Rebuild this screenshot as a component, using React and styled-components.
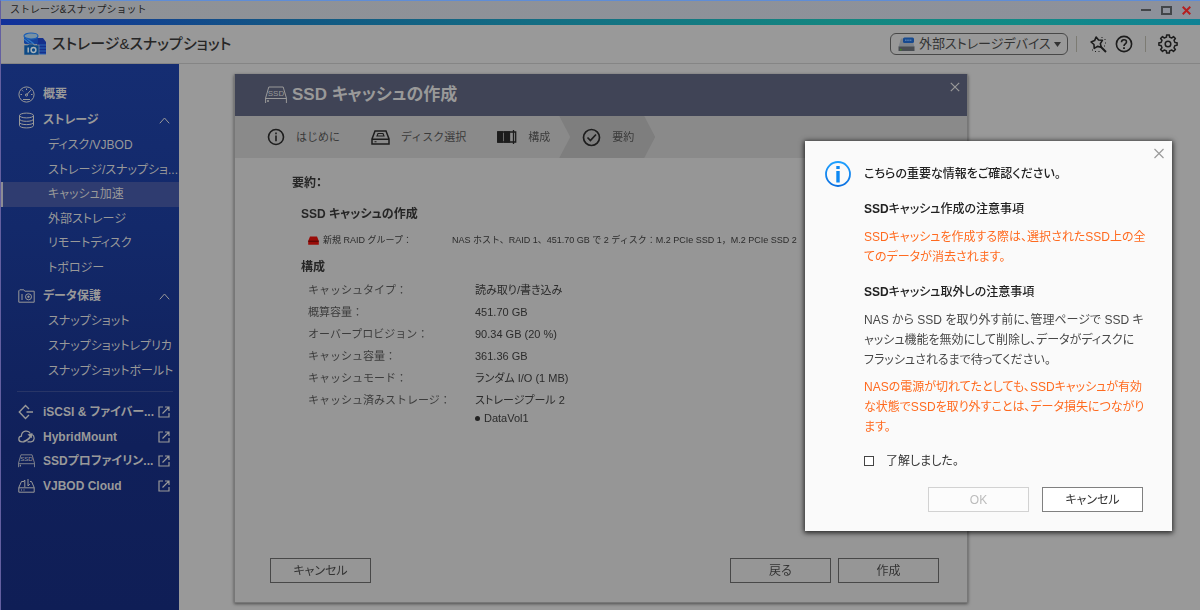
import React, { useState } from "react";
import styled, { createGlobalStyle, css } from "styled-components";

const GlobalStyle = createGlobalStyle`
  *, *::before, *::after { box-sizing: border-box; }
  body {
    margin: 0;
    background: #999;
    color: #2b2b2b;
    font-family: "Liberation Sans", "Noto Sans CJK JP", sans-serif;
    font-size: 12px;
    font-feature-settings: "palt";
    line-height: 20px;
  }
  h1, h2, h3, p, ul, dl, dd { margin: 0; padding: 0; font-size: inherit; font-weight: inherit; }
  ul { list-style: none; }
  a { color: inherit; text-decoration: none; }
  button, select { font: inherit; font-feature-settings: inherit; color: inherit; }
  svg { display: block; flex: none; }
`;

/* ---------- window frame ---------- */

const Window = styled.div`
  display: flex;
  flex-direction: column;
  min-height: 100vh;
  border-top: 1px solid #5f8dd6;
  border-left: 1px solid #635fa0;
`;

const TitleBar = styled.header`
  display: flex;
  align-items: center;
  justify-content: space-between;
  height: 18px;
  padding: 0 9px;
  background: linear-gradient(90deg, #8f9296, #8d919b);
  font-size: 10px;
  font-feature-settings: normal;
  color: #1f1f1f;
`;

const WindowButtons = styled.div`
  display: flex;
  gap: 10px;
`;

const IconButton = styled.button`
  display: flex;
  align-items: center;
  justify-content: center;
  padding: 0;
  border: 0;
  background: none;
  color: ${(p) => p.$color || "#1c1c1c"};
`;

const Stripe = styled.div`
  height: 6px;
  background: linear-gradient(90deg, #11309a 0%, #125783 24%, #136d83 45%, #138680 70%, #128a86 85%, #108295 100%);
`;

const AppHeader = styled.header`
  display: flex;
  align-items: center;
  height: 39px;
  padding: 0 22px 0 22px;
  border-bottom: 1px solid #858585;
`;

const AppTitle = styled.h1`
  flex: 1;
  margin-left: 5px;
  font-size: 15px;
  font-weight: 500;
  color: #262626;
`;

const DevicePicker = styled.label`
  display: flex;
  align-items: center;
  gap: 4px;
  width: 178px;
  height: 22px;
  padding: 0 6px 0 7px;
  border: 1px solid #484848;
  border-radius: 6px;
`;

const DeviceSelect = styled.select`
  flex: 1;
  min-width: 0;
  height: 20px;
  padding: 0;
  border: 0;
  appearance: none;
  background: none;
  font-size: 13px;
  line-height: 20px;
  color: #333;
`;

const Separator = styled.span`
  width: 1px;
  height: 16px;
  margin: 0 ${(p) => p.$right}px 0 ${(p) => p.$left}px;
  background: #7c7b73;
`;

const HeaderTools = styled.div`
  display: flex;
  gap: 8px;
`;

/* ---------- sidebar ---------- */

const Columns = styled.div`
  display: flex;
  flex: 1;
`;

const Sidebar = styled.nav`
  width: 178px;
  padding-top: 17px;
  background: linear-gradient(#152d72, #13296a 30%, #10205a 70%, #0f1e56);
  color: #999;
`;

const GroupLink = styled.a`
  display: flex;
  align-items: center;
  gap: 8px;
  height: ${(p) => (p.$small ? 24 : 26)}px;
  padding: 0 9px 0 17px;
  font-weight: 700;
  white-space: nowrap;
`;

const GroupLabel = styled.span`
  flex: 1;
  min-width: 0;
`;

const SubList = styled.ul`
  display: grid;
  grid-template-columns: 100%;
  grid-auto-rows: 1fr;
  height: ${(p) => p.$height}px;
  margin-bottom: 3px;
`;

const SubLink = styled.a`
  display: flex;
  align-items: center;
  height: 100%;
  padding-left: 47px;
  white-space: nowrap;
  ${(p) =>
    p.$active &&
    css`
      padding-left: 45px;
      border-left: 2px solid #8c8c94;
      background: #2f3c70;
    `}
`;

const Rule = styled.hr`
  margin: 8px 6px 8px 16px;
  border: 0;
  border-top: 1px solid #283567;
`;

/* ---------- wizard ---------- */

const Layer = styled.div`
  position: fixed;
  inset: 0;
  display: flex;
  justify-content: ${(p) => p.$justify};
  align-items: ${(p) => p.$align};
  padding: ${(p) => p.$padding};
`;

const Wizard = styled.section`
  display: flex;
  flex-direction: column;
  width: 100%;
  max-width: 734px;
  border: 1px solid #777;
  border-top: 0;
  background: #969696;
  box-shadow: 0 1px 3px rgba(0, 0, 0, 0.5);
`;

const WizardHeader = styled.header`
  display: flex;
  align-items: center;
  gap: 5px;
  height: 42px;
  padding: 0 7px 0 30px;
  background: #404456;
  color: #999;
`;

const WizardTitle = styled.h2`
  flex: 1;
  font-size: 17px;
  font-weight: 700;
`;

const CloseSlot = styled.div`
  align-self: flex-start;
  margin-top: 8px;
`;

const Steps = styled.ol`
  display: flex;
  height: 42px;
  margin: 0;
  padding: 0 0 0 32px;
  list-style: none;
  background: #8a8a8a;
  font-size: 11px;
  font-feature-settings: normal;
  color: #3a3a3a;
  svg { color: #1d1d1d; }
`;

const Step = styled.li`
  display: flex;
  align-items: center;
  gap: 11px;
  padding-right: 31px;
  ${(p) =>
    p.$current &&
    css`
      margin-left: -22px;
      padding: 0 21px 0 23px;
      background: #7e7e7e;
      clip-path: polygon(0 0, calc(100% - 11px) 0, 100% 50%, calc(100% - 11px) 100%, 0 100%, 11px 50%);
    `}
`;

const WizardBody = styled.div`
  flex: 1;
  padding: 15px 29px 0 57px;
`;

const BodyHeading = styled.h3`
  margin-left: ${(p) => p.$indent || 0}px;
  margin-bottom: ${(p) => p.$below || 0}px;
  font-weight: 700;
  color: #262626;
`;

const RaidRow = styled.dl`
  display: flex;
  align-items: center;
  margin: 6px 0 7px 16px;
  font-size: 9px;
  font-feature-settings: normal;
  white-space: nowrap;
`;

const RaidTerm = styled.dt`
  display: flex;
  align-items: center;
  gap: 4px;
  width: 144px;
`;

const Facts = styled.table`
  margin: 2px 0 0 16px;
  border-collapse: collapse;
  font-size: 11px;
  th, td { height: 22px; padding: 0; vertical-align: top; text-align: left; font-weight: 400; line-height: 22px; }
  th { width: 167px; font-feature-settings: normal; color: #3c3c3c; }
`;

const Volume = styled.div`
  display: flex;
  align-items: center;
  gap: 4px;
  line-height: 14px;
  &::before { content: ""; width: 5px; height: 5px; border-radius: 50%; background: #222; }
`;

const WizardFooter = styled.footer`
  display: flex;
  gap: 7px;
  padding: 0 28px 19px 35px;
`;

const Button = styled.button`
  width: 101px;
  height: 25px;
  padding: 0;
  border: 1px solid ${(p) => (p.$light ? "#808080" : "#484848")};
  background: ${(p) => (p.$light ? "#fff" : "transparent")};
  color: #333;
  ${(p) => p.$push && "margin-right: auto;"}
  &:disabled { border-color: #d2d2d2; background: #fcfcfc; color: #bcbcbc; }
`;

/* ---------- notice ---------- */

const Notice = styled.section`
  display: flex;
  flex-direction: column;
  width: 367px;
  max-width: 100%;
  padding: 4px 6px 19px 20px;
  background: #fafafa;
  box-shadow: 0 1px 5px 1px rgba(0, 0, 0, 0.75);
`;

const NoticeClose = styled.div`
  align-self: flex-end;
  height: 16px;
`;

const NoticeHead = styled.div`
  display: flex;
  align-items: center;
  gap: 13px;
  height: 26px;
  font-weight: 500;
  color: #222;
`;

const NoticeBody = styled.div`
  margin-left: 39px;
  padding-top: 12px;
`;

const NoticeHeading = styled.h3`
  margin-bottom: 8px;
  font-weight: 500;
  color: #222;
`;

const Paragraph = styled.p`
  margin-bottom: ${(p) => p.$below}px;
  white-space: nowrap;
  color: ${(p) => (p.$warning ? "#ff6a1f" : "#484848")};
`;

const Consent = styled.label`
  display: flex;
  align-items: center;
  gap: 12px;
  color: #333;
`;

const Checkbox = styled.input`
  width: 10px;
  height: 10px;
  margin: 0;
  appearance: none;
  border: 1px solid #444;
  background: #fff;
  &:checked { background: #444; }
`;

const NoticeActions = styled.div`
  display: flex;
  justify-content: flex-end;
  gap: 13px;
  margin-top: 16px;
  padding-right: 23px;
`;

/* ---------- icons ---------- */

const Svg = ({ w, h = w, vw = w, vh = h, sw = 1, children }) => (
  <svg width={w} height={h} viewBox={`0 0 ${vw} ${vh}`} fill="none" stroke="currentColor" strokeWidth={sw} aria-hidden="true">
    {children}
  </svg>
);

const AppLogo = () => (
  <svg width="24" height="24" viewBox="0 0 24 24" aria-hidden="true">
    <path d="M14 6 L20 6 L23 10 V22 H14z" fill="#16308c" />
    <path d="M16 13h7M16 16h7M16 19h7M16 22h7" stroke="#2a65b5" strokeWidth="1" />
    <path d="M1 4v7c0 2 14 2 14 0V4z" fill="#16439c" />
    <path d="M1 7l5 4M3 6l8 6" stroke="#2f79c4" strokeWidth="1.4" />
    <ellipse cx="8" cy="4" rx="7" ry="3" fill="#7791a5" stroke="#1b5eb5" strokeWidth="1.2" />
    <path d="M1 13h4l1-1h4l1 1h5v10H1z" fill="#0e4a86" stroke="#999" strokeWidth="0.6" />
    <path d="M5.2 15.5v5" stroke="#a8b2b8" strokeWidth="1.5" />
    <circle cx="10.5" cy="18" r="2.4" fill="none" stroke="#a8b2b8" strokeWidth="1.5" />
  </svg>
);

const DeviceIcon = () => (
  <svg width="17" height="15" viewBox="0 0 17 15" aria-hidden="true">
    <path d="M3 1.500h11l2.500 8.500h-16z" fill="#7d838a" />
    <path d="M0.5 9.5h16v4.5h-16z" fill="#494d52" />
    <rect x="5" y="0.5" width="11" height="5.5" rx="1.5" fill="#174a8f" />
    <path d="M7 3.3h7" stroke="#4f7ab0" strokeWidth="1.4" strokeDasharray="1.6 .6" />
    <circle cx="2.8" cy="12.6" r=".9" fill="#3c8a1e" />
  </svg>
);

const starPath = Array.from({ length: 10 }, (_, i) => {
  const a = (i * Math.PI) / 5 - 0.15;
  const r = i % 2 ? 3.4 : 6;
  return `${i ? "L" : "M"}${(7 + r * Math.sin(a)).toFixed(2)} ${(7 - r * Math.cos(a)).toFixed(2)}`;
}).join("");

const WandIcon = () => (
  <Svg w={17} sw={1.6}>
    <path d={`${starPath}z`} strokeLinejoin="round" />
    <path d="M10.500 10.500l5.500 5.500" strokeWidth="2" />
    <path d="M11.500 1.500h1M14.500 3.500h1M15 7h1M14 10h1M2 14h1M5 15.500h1M8.500 15.500h1" strokeWidth="1" />
  </Svg>
);

const HelpIcon = () => (
  <Svg w={18} sw={1.6}>
    <circle cx="9" cy="9" r="7.6" />
    <path d="M6.5 7.2c0-3.4 5-3.2 5-.3 0 1.9-2.5 1.9-2.5 4" />
    <path d="M9 12.2v1.8" strokeWidth="1.8" />
  </Svg>
);

const gearPath = (() => {
  const points = [];
  for (let i = 0; i < 8; i += 1) {
    const a = (i * Math.PI) / 4;
    [[-0.22, 7.1], [-0.15, 9.2], [0.15, 9.2], [0.22, 7.1]].forEach(([d, r]) => {
      points.push(`${(10 + r * Math.sin(a + d)).toFixed(2)} ${(10 - r * Math.cos(a + d)).toFixed(2)}`);
    });
  }
  return `M${points.join("L")}z`;
})();

const GearIcon = () => (
  <Svg w={20} sw={1.5}>
    <path d={gearPath} strokeLinejoin="round" />
    <circle cx="10" cy="10" r="2.8" />
  </Svg>
);

const GaugeIcon = () => (
  <Svg w={17}>
    <circle cx="8.5" cy="8.5" r="7.6" />
    <path d="M8.5 2.5v1.5M4.2 4.3l1 1M2.5 8.5H4M13 8.5h1.5M12.8 4.2L8.8 8.6" />
    <circle cx="8.5" cy="9" r="1.1" />
    <path d="M5 13.5h7" />
  </Svg>
);

const DatabaseIcon = () => (
  <Svg w={17}>
    <ellipse cx="8.5" cy="3.5" rx="7" ry="2.4" />
    <path d="M1.5 3.5v10c0 3.2 14 3.2 14 0v-10M1.5 7c0 3.1 14 3.1 14 0M1.5 10.3c0 3.1 14 3.1 14 0" />
  </Svg>
);

const SnapshotIcon = () => (
  <Svg w={17} h={14}>
    <path d="M.8 13.2V1.8l1-1h4l1 1.4h9.4v11z" />
    <path d="M4 5v6" />
    <circle cx="10.5" cy="7.8" r="3" />
    <circle cx="10.5" cy="7.8" r="0.8" fill="currentColor" />
  </Svg>
);

const IscsiIcon = () => (
  <Svg w={17} sw={1.4}>
    <path d="M11 5L7.5 1.5 1.3 8l6.2 6.5L11 11M8.5 8h6.5" />
  </Svg>
);

const CloudIcon = () => (
  <Svg w={17} h={13} sw={1.2}>
    <path d="M6.500 11.800H4C-.3 11.800 0 6.500 3.400 6.200 3.500 .2 10.500-.2 12.300 3.500M9.500 11.800h3.500c3.800 0 4-5.600 1.200-7.300" />
    <path d="M5.500 11.500C8 11 10.500 9.500 12.500 6.500" strokeWidth="1.600" />
    <path d="M9.500 4.500l5-1.500-.8 5.200z" fill="currentColor" stroke="none" />
  </Svg>
);

const SsdIcon = ({ w = 17, h = 14 }) => (
  <svg width={w} height={h} viewBox="0 0 22 18" fill="none" stroke="currentColor" aria-hidden="true">
    <path d="M.6 17V12L3.800 1h14.400l3.200 11v5M.6 12.500h20.800" />
    <text x="11" y="9.500" textAnchor="middle" fontSize="8" fontWeight="400" fill="currentColor" stroke="none">SSD</text>
    <path d="M3 14v2" strokeWidth="1.500" />
  </svg>
);

const VjbodIcon = () => (
  <Svg w={17} h={14}>
    <path d="M5 2.500H3.500L.8 8.500v4.700h15.400V8.500L13.500 2.500H12M.8 8.800h15.400M3 11h1M5.500 11h1" />
    <path d="M6.800 8V1L5 3M10 0v7l1.800-2" />
  </Svg>
);

const ExternalIcon = () => (
  <Svg w={12} sw={1.200}>
    <path d="M5 1H1v10h10V7M7 1h4v4M11 1L4.500 7.500" />
  </Svg>
);

const ChevronUp = () => (
  <Svg w={11} h={7}>
    <path d="M.8 6.300L5.500 1l4.700 5.300" />
  </Svg>
);

const CloseIcon = ({ size = 10, sw = 1.200 }) => (
  <Svg w={size} vw={10} vh={10} sw={sw}>
    <path d="M.8.8l8.400 8.400M9.200.8L.8 9.200" />
  </Svg>
);

const InfoStepIcon = () => (
  <Svg w={18} sw={1.600}>
    <circle cx="9" cy="9" r="7.500" />
    <path d="M9 7.500v5.800M9 4.500v1.700" />
  </Svg>
);

const DriveStepIcon = () => (
  <Svg w={19} h={15} sw={1.500}>
    <path d="M1 9L4 1h11l3 8v5H1zM1 9.200h17" />
    <path d="M6 6l1-2.500h5l1 2.500zM3.500 11.700h2" strokeWidth="1.100" />
  </Svg>
);

const ConfigStepIcon = () => (
  <Svg w={20} h={14} sw={1.300}>
    <path d="M.7 2h18v10H.7z" />
    <path d="M1 2h4.500v10H1zM7.500 2h5v10h-5z" fill="currentColor" />
    <path d="M16.500 0v14" />
  </Svg>
);

const CheckStepIcon = () => (
  <Svg w={19} sw={1.700}>
    <circle cx="9.500" cy="9.500" r="8" />
    <path d="M5.500 9.500l2.900 3 5.600-6" />
  </Svg>
);

const RedDriveIcon = () => (
  <svg width="11" height="9" viewBox="0 0 11 9" aria-hidden="true">
    <path d="M2 0.500h7l1.800 4.500v3.700H.2V5z" fill="#990c08" />
    <path d="M.2 5.200h10.600" stroke="#4d0503" />
  </svg>
);

const InfoIcon = () => (
  <svg width="26" height="26" viewBox="0 0 26 26" fill="none" aria-hidden="true">
    <defs>
      <linearGradient id="info" x1="0" y1="0" x2="0" y2="1">
        <stop offset="0" stopColor="#1ea0ff" />
        <stop offset="1" stopColor="#0a6fe0" />
      </linearGradient>
    </defs>
    <circle cx="13" cy="13" r="12" stroke="url(#info)" strokeWidth="1.800" />
    <path d="M11.300 5h3.400v3h-3.400zM11.300 10h3.400v11.500h-3.400z" fill="#0d88f2" />
  </svg>
);

/* ---------- data ---------- */

const storageItems = [
  "ディスク/VJBOD",
  "ストレージ/スナップショ...",
  "キャッシュ加速",
  "外部ストレージ",
  "リモートディスク",
  "トポロジー",
];

const protectionItems = ["スナップショット", "スナップショットレプリカ", "スナップショットボールト"];

const externalApps = [
  { label: "iSCSI & ファイバー...", Icon: IscsiIcon },
  { label: "HybridMount", Icon: CloudIcon },
  { label: "SSDプロファイリン...", Icon: SsdIcon },
  { label: "VJBOD Cloud", Icon: VjbodIcon },
];

const steps = [
  { label: "はじめに", Icon: InfoStepIcon },
  { label: "ディスク選択", Icon: DriveStepIcon },
  { label: "構成", Icon: ConfigStepIcon },
  { label: "要約", Icon: CheckStepIcon, current: true },
];

const facts = [
  ["キャッシュタイプ：", "読み取り/書き込み"],
  ["概算容量：", "451.70 GB"],
  ["オーバープロビジョン：", "90.34 GB (20 %)"],
  ["キャッシュ容量：", "361.36 GB"],
  ["キャッシュモード：", "ランダム I/O (1 MB)"],
];

const NavGroup = ({ label, Icon, items, height }) => (
  <>
    <GroupLink href="#">
      <Icon />
      <GroupLabel>{label}</GroupLabel>
      {items && <ChevronUp />}
    </GroupLink>
    {items && (
      <SubList $height={height}>
        {items.map((item) => (
          <li key={item}>
            <SubLink href="#" $active={item === "キャッシュ加速"}>{item}</SubLink>
          </li>
        ))}
      </SubList>
    )}
  </>
);

export default function App() {
  const [agreed, setAgreed] = useState(false);

  return (
    <>
      <GlobalStyle />
      <Window>
        <TitleBar>
          <span>ストレージ&amp;スナップショット</span>
          <WindowButtons>
            <IconButton aria-label="最小化" $color="#424549">
              <Svg w={10} sw={2}><path d="M0 5h10" /></Svg>
            </IconButton>
            <IconButton aria-label="最大化" $color="#424549">
              <Svg w={11} h={9} sw={2}><path d="M1 1h9v7H1z" /></Svg>
            </IconButton>
            <IconButton aria-label="閉じる" $color="#b51f1f">
              <CloseIcon size={9} sw={2.200} />
            </IconButton>
          </WindowButtons>
        </TitleBar>
        <Stripe />
        <AppHeader>
          <AppLogo />
          <AppTitle>ストレージ&amp;スナップショット</AppTitle>
          <DevicePicker>
            <DeviceIcon />
            <DeviceSelect aria-label="デバイス">
              <option>外部ストレージデバイス</option>
            </DeviceSelect>
            <svg width="7" height="5" viewBox="0 0 7 5" aria-hidden="true"><path d="M0 0h7L3.500 5z" fill="#333" /></svg>
          </DevicePicker>
          <Separator $left={8} $right={13} />
          <HeaderTools>
            <IconButton aria-label="ツール"><WandIcon /></IconButton>
            <IconButton aria-label="ヘルプ"><HelpIcon /></IconButton>
          </HeaderTools>
          <Separator $left={12} $right={12} />
          <IconButton aria-label="設定"><GearIcon /></IconButton>
        </AppHeader>
        <Columns>
          <Sidebar>
            <NavGroup label="概要" Icon={GaugeIcon} />
            <NavGroup label="ストレージ" Icon={DatabaseIcon} items={storageItems} height={147} />
            <NavGroup label="データ保護" Icon={SnapshotIcon} items={protectionItems} height={74} />
            <Rule />
            <SubList $height={98}>
              {externalApps.map(({ label, Icon }) => (
                <li key={label}>
                  <GroupLink href="#" $small>
                    <Icon />
                    <GroupLabel>{label}</GroupLabel>
                    <ExternalIcon />
                  </GroupLink>
                </li>
              ))}
            </SubList>
          </Sidebar>
        </Columns>
      </Window>

      <Layer $justify="center" $align="stretch" $padding="74px 16px 7px 18px">
        <Wizard role="dialog" aria-label="SSD キャッシュの作成">
          <WizardHeader>
            <SsdIcon w={22} h={18} />
            <WizardTitle>SSD キャッシュの作成</WizardTitle>
            <CloseSlot>
              <IconButton aria-label="閉じる" $color="#999"><CloseIcon /></IconButton>
            </CloseSlot>
          </WizardHeader>
          <Steps>
            {steps.map(({ label, Icon, current }) => (
              <Step key={label} $current={current}>
                <Icon />
                {label}
              </Step>
            ))}
          </Steps>
          <WizardBody>
            <BodyHeading $below={11}>要約：</BodyHeading>
            <BodyHeading $indent={9}>SSD キャッシュの作成</BodyHeading>
            <RaidRow>
              <RaidTerm><RedDriveIcon />新規 RAID グループ：</RaidTerm>
              <dd>NAS ホスト、RAID 1、451.70 GB で 2 ディスク：M.2 PCIe SSD 1，M.2 PCIe SSD 2</dd>
            </RaidRow>
            <BodyHeading $indent={9}>構成</BodyHeading>
            <Facts>
              <tbody>
                {facts.map(([term, value]) => (
                  <tr key={term}>
                    <th scope="row">{term}</th>
                    <td>{value}</td>
                  </tr>
                ))}
                <tr>
                  <th scope="row">キャッシュ済みストレージ：</th>
                  <td>
                    ストレージプール 2
                    <Volume>DataVol1</Volume>
                  </td>
                </tr>
              </tbody>
            </Facts>
          </WizardBody>
          <WizardFooter>
            <Button $push>キャンセル</Button>
            <Button>戻る</Button>
            <Button>作成</Button>
          </WizardFooter>
        </Wizard>
      </Layer>

      <Layer $justify="flex-end" $align="flex-start" $padding="141px 28px 0 28px">
        <Notice role="alertdialog" aria-label="SSDキャッシュの注意事項">
          <NoticeClose>
            <IconButton aria-label="閉じる" $color="#9a9a9a"><Svg w={14} sw={1.200}><path d="M2.500 4l9 9M11.500 4l-9 9" /></Svg></IconButton>
          </NoticeClose>
          <NoticeHead>
            <InfoIcon />
            <span>こちらの重要な情報をご確認ください。</span>
          </NoticeHead>
          <NoticeBody>
            <NoticeHeading><b>SSD</b>キャッシュ作成の注意事項</NoticeHeading>
            <Paragraph $warning $below={15}>
              SSDキャッシュを作成する際は、選択されたSSD上の全<br />
              てのデータが消去されます。
            </Paragraph>
            <NoticeHeading><b>SSD</b>キャッシュ取外しの注意事項</NoticeHeading>
            <Paragraph $below={7}>
              NAS から SSD を取り外す前に、管理ページで SSD キ<br />
              ャッシュ機能を無効にして削除し、データがディスクに<br />
              フラッシュされるまで待ってください。
            </Paragraph>
            <Paragraph $warning $below={14}>
              NASの電源が切れてたとしても、SSDキャッシュが有効<br />
              な状態でSSDを取り外すことは、データ損失につながり<br />
              ます。
            </Paragraph>
            <Consent>
              <Checkbox type="checkbox" checked={agreed} onChange={(e) => setAgreed(e.target.checked)} />
              了解しました。
            </Consent>
          </NoticeBody>
          <NoticeActions>
            <Button $light disabled={!agreed}>OK</Button>
            <Button $light>キャンセル</Button>
          </NoticeActions>
        </Notice>
      </Layer>
    </>
  );
}
